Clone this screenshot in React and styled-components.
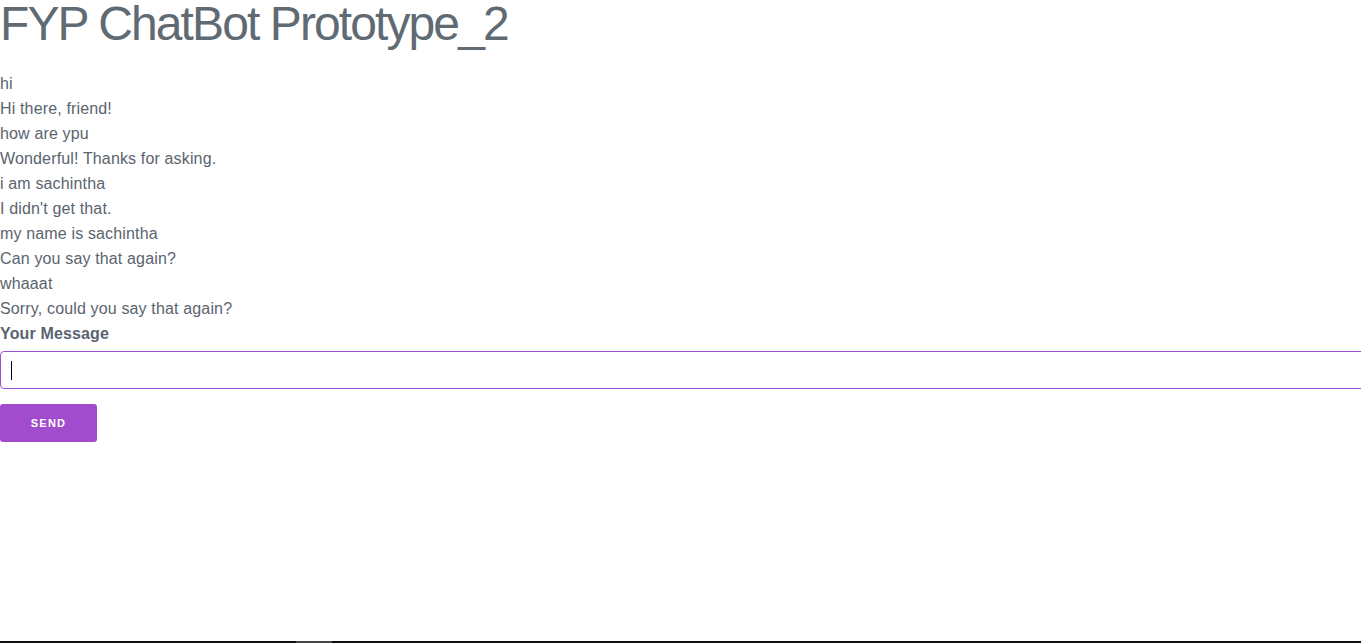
import React, { useState } from "react";
import styled, { createGlobalStyle } from "styled-components";

const GlobalStyle = createGlobalStyle`
  html, body {
    margin: 0;
    padding: 0;
    background: #ffffff;
    font-family: "Liberation Sans", Arial, sans-serif;
    color: #5a646e;
    overflow: hidden;
  }
`;

const Page = styled.div`
  display: flex;
  flex-direction: column;
  min-height: 643px;
`;

const Title = styled.h1`
  margin: 0;
  font-size: 48px;
  line-height: 48px;
  font-weight: 400;
  letter-spacing: -1.9px;
  color: #5f6a73;
  white-space: nowrap;
`;

const Chat = styled.div`
  display: flex;
  flex-direction: column;
  margin-top: 23px;
`;

const Line = styled.div`
  font-size: 16px;
  line-height: 25px;
  letter-spacing: 0.15px;
  font-weight: ${({ $bold }) => ($bold ? 700 : 400)};
`;

const Form = styled.form`
  display: flex;
  flex-direction: column;
  align-items: flex-start;
`;

const Field = styled.div`
  position: relative;
  margin-top: 5px;
  width: 1366px;

  &::after {
    content: "";
    position: absolute;
    left: 11px;
    top: 10px;
    width: 1px;
    height: 19px;
    background: #000;
    display: ${({ $empty }) => ($empty ? "block" : "none")};
  }
`;

const Input = styled.input`
  box-sizing: border-box;
  width: 100%;
  height: 38px;
  padding: 0 11px;
  border: 1px solid #9c4fcf;
  border-radius: 4px;
  font: 16px "Liberation Sans", Arial, sans-serif;
  color: #222;
  outline: none;
`;

const Send = styled.button`
  margin-top: 15px;
  width: 97px;
  height: 38px;
  border: none;
  border-radius: 3px;
  background: #a04ccc;
  color: #ffffff;
  font: 700 11px "Liberation Sans", Arial, sans-serif;
  letter-spacing: 1.2px;
  cursor: pointer;
`;

const ScrollTrack = styled.div`
  position: fixed;
  left: 0;
  right: 0;
  bottom: 0;
  height: 2px;
  background: #0d0f12;
`;

const ScrollThumb = styled.div`
  position: absolute;
  top: 0;
  left: 296px;
  width: 36px;
  height: 2px;
  background: #44474c;
`;

const messages = [
  "hi",
  "Hi there, friend!",
  "how are ypu",
  "Wonderful! Thanks for asking.",
  "i am sachintha",
  "I didn't get that.",
  "my name is sachintha",
  "Can you say that again?",
  "whaaat",
  "Sorry, could you say that again?",
];

export default function App() {
  const [text, setText] = useState("");

  return (
    <Page>
      <GlobalStyle />
      <Title>FYP ChatBot Prototype_2</Title>
      <Chat>
        {messages.map((m, i) => (
          <Line key={i}>{m}</Line>
        ))}
      </Chat>
      <Form onSubmit={(e) => e.preventDefault()}>
        <Line $bold>Your Message</Line>
        <Field $empty={text === ""}>
          <Input value={text} onChange={(e) => setText(e.target.value)} />
        </Field>
        <Send type="submit">SEND</Send>
      </Form>
      <ScrollTrack>
        <ScrollThumb />
      </ScrollTrack>
    </Page>
  );
}
